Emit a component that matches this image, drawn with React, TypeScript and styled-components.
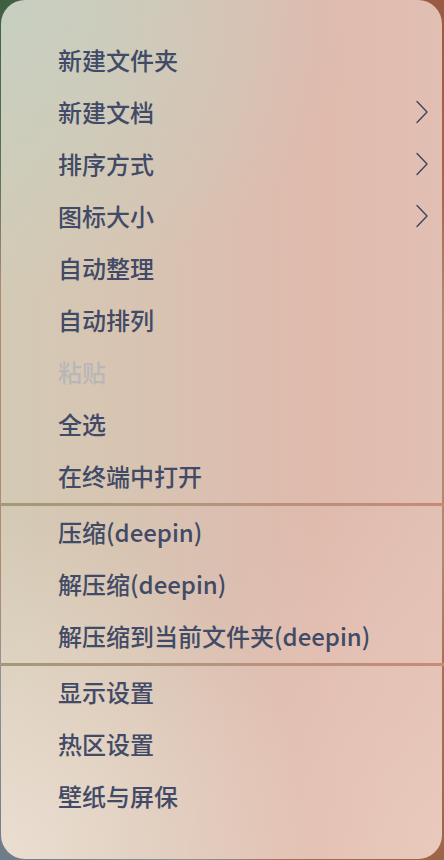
import React from "react";
import styled, { createGlobalStyle } from "styled-components";

const Global = createGlobalStyle`
  html, body { margin: 0; padding: 0; }
  body {
    width: 444px;
    height: 860px;
    overflow: hidden;
    font-family: "Noto Sans CJK SC", "Noto Sans", sans-serif;
  }
`;

const Desktop = styled.div`
  width: 444px;
  height: 860px;
  display: flex;
  background:
    radial-gradient(circle at 0% 0%, #3f5e42 0%, #5a7458 18%, transparent 30%),
    radial-gradient(circle at 100% 0%, #9a5a42 0%, #a8664c 20%, transparent 32%),
    radial-gradient(circle at 0% 100%, #6e7c88 0%, #8a929a 18%, transparent 30%),
    radial-gradient(circle at 100% 100%, #9c6448 0%, #a87056 20%, transparent 32%),
    #b08a70;
`;

const Menu = styled.div`
  flex: 1;
  margin: 0 2px 1px 1px;
  border-radius: 24px;
  padding: 34px 0 0;
  display: flex;
  flex-direction: column;
  background:
    radial-gradient(ellipse 80% 35% at 0% 0%, rgba(198, 208, 194, 0.9), rgba(198, 208, 194, 0) 100%),
    radial-gradient(ellipse 70% 40% at 0% 100%, rgba(238, 224, 212, 0.9), rgba(238, 224, 212, 0) 100%),
    radial-gradient(ellipse 70% 45% at 100% 100%, rgba(234, 204, 190, 0.8), rgba(234, 204, 190, 0) 100%),
    linear-gradient(90deg, #d3cab5 0%, #d7c5b2 25%, #dbbfb0 50%, #dfbaad 72%, #e2bfb3 100%);
`;

const Item = styled.div<{ $disabled?: boolean }>`
  height: 52px;
  display: flex;
  align-items: center;
  padding: 0 13px 0 57px;
  font-size: 24px;
  font-weight: 500;
  line-height: 1;
  color: ${(p) => (p.$disabled ? "rgba(160, 168, 190, 0.55)" : "#414a66")};
`;

const Label = styled.span`
  flex: 1;
  white-space: nowrap;
`;

const Separator = styled.div`
  height: 3px;
  margin: 1px -2px 0 -1px;
  background: linear-gradient(90deg, #a5987a 0%, #b39680 45%, #c78a78 100%);
`;

const Chevron = () => (
  <svg width="14" height="24" viewBox="0 0 14 24" fill="none">
    <path d="M2 1.5 L12 12 L2 22.5" stroke="#3e4660" strokeWidth="1.4" strokeLinecap="round" strokeLinejoin="round" />
  </svg>
);

type Entry = { label: string; sub?: boolean; disabled?: boolean } | "sep";

const entries: Entry[] = [
  { label: "新建文件夹" },
  { label: "新建文档", sub: true },
  { label: "排序方式", sub: true },
  { label: "图标大小", sub: true },
  { label: "自动整理" },
  { label: "自动排列" },
  { label: "粘贴", disabled: true },
  { label: "全选" },
  { label: "在终端中打开" },
  "sep",
  { label: "压缩(deepin)" },
  { label: "解压缩(deepin)" },
  { label: "解压缩到当前文件夹(deepin)" },
  "sep",
  { label: "显示设置" },
  { label: "热区设置" },
  { label: "壁纸与屏保" },
];

export default function App() {
  return (
    <>
      <Global />
      <Desktop>
        <Menu>
          {entries.map((e, i) =>
            e === "sep" ? (
              <Separator key={i} />
            ) : (
              <Item key={i} $disabled={e.disabled}>
                <Label>{e.label}</Label>
                {e.sub && <Chevron />}
              </Item>
            )
          )}
        </Menu>
      </Desktop>
    </>
  );
}
